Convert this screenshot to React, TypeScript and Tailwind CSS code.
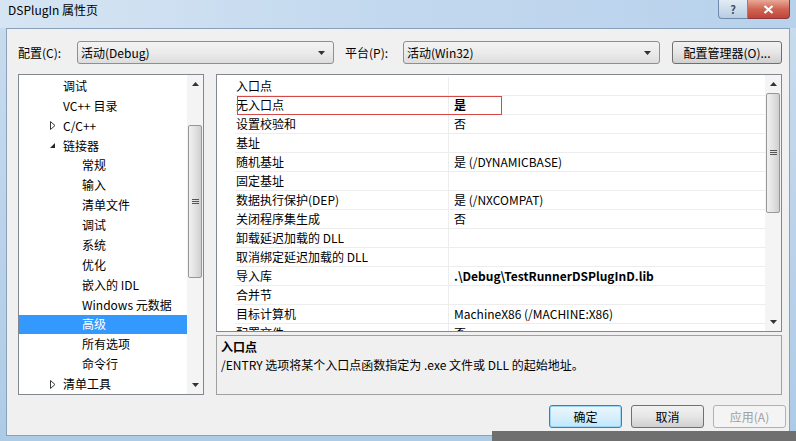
import React from "react";

const FONT = { fontFamily: '"Noto Sans CJK SC", "Liberation Sans", sans-serif' };

type TreeItem = { label: string; level: 1 | 2; arrow?: "open" | "closed"; selected?: boolean };

const treeItems: TreeItem[] = [
  { label: "调试", level: 1 },
  { label: "VC++ 目录", level: 1 },
  { label: "C/C++", level: 1, arrow: "closed" },
  { label: "链接器", level: 1, arrow: "open" },
  { label: "常规", level: 2 },
  { label: "输入", level: 2 },
  { label: "清单文件", level: 2 },
  { label: "调试", level: 2 },
  { label: "系统", level: 2 },
  { label: "优化", level: 2 },
  { label: "嵌入的 IDL", level: 2 },
  { label: "Windows 元数据", level: 2 },
  { label: "高级", level: 2, selected: true },
  { label: "所有选项", level: 2 },
  { label: "命令行", level: 2 },
  { label: "清单工具", level: 1, arrow: "closed" },
];

type Prop = { name: string; value?: string; bold?: boolean };

const props: Prop[] = [
  { name: "入口点" },
  { name: "无入口点", value: "是", bold: true },
  { name: "设置校验和", value: "否" },
  { name: "基址" },
  { name: "随机基址", value: "是 (/DYNAMICBASE)" },
  { name: "固定基址" },
  { name: "数据执行保护(DEP)", value: "是 (/NXCOMPAT)" },
  { name: "关闭程序集生成", value: "否" },
  { name: "卸载延迟加载的 DLL" },
  { name: "取消绑定延迟加载的 DLL" },
  { name: "导入库", value: ".\\Debug\\TestRunnerDSPlugInD.lib", bold: true },
  { name: "合并节" },
  { name: "目标计算机", value: "MachineX86 (/MACHINE:X86)" },
  { name: "配置文件", value: "否" },
];

const Tri = ({ dir }: { dir: "up" | "down" }) => (
  <svg width="7" height="4" viewBox="0 0 7 4">
    {dir === "up" ? <path d="M0 4 L3.5 0 L7 4 Z" fill="#333" /> : <path d="M0 0 L7 0 L3.5 4 Z" fill="#333" />}
  </svg>
);

const Grip = () => (
  <svg width="7" height="6" viewBox="0 0 7 6">
    <path d="M0 0.5H7M0 2.5H7M0 4.5H7" stroke="#555" strokeWidth="1" />
  </svg>
);

const Scrollbar = ({ thumbTop, thumbHeight }: { thumbTop: number; thumbHeight: number }) => (
  <div className="relative w-[16px] h-full bg-[#f4f4f4] flex flex-col items-center justify-between py-[7px]">
    <Tri dir="up" />
    <div
      className="absolute left-[1px] w-[14px] rounded-[2px] border border-[#979797] bg-gradient-to-r from-[#f0f0f0] via-[#e2e2e2] to-[#cfcfcf] flex items-center justify-center"
      style={{ top: thumbTop, height: thumbHeight }}
    >
      <Grip />
    </div>
    <Tri dir="down" />
  </div>
);

const Combo = ({ text, width }: { text: string; width: string }) => (
  <div
    className={`${width} h-[23px] rounded-[3px] border border-[#8e8f8f] bg-gradient-to-b from-[#f3f3f3] via-[#ebebeb] to-[#dddddd] flex items-center pl-[3px] pr-[8px] text-[12px] text-black`}
  >
    <span className="flex-1 leading-none">{text}</span>
    <Tri dir="down" />
  </div>
);

const Button = ({ children, variant }: { children: React.ReactNode; variant?: "default" | "disabled" }) => {
  const base = "w-[73px] h-[23px] rounded-[3px] border flex items-center justify-center text-[12px]";
  if (variant === "default")
    return <div className={`${base} border-[#3c7fb1] bg-gradient-to-b from-[#eaf6fd] via-[#d9f0fc] to-[#bee6fd] text-black shadow-[inset_0_0_0_1px_#9fd5f5]`}>{children}</div>;
  if (variant === "disabled")
    return <div className={`${base} border-[#adb2b5] bg-[#f4f4f4] text-[#a0a0a0]`}>{children}</div>;
  return <div className={`${base} border-[#707070] bg-gradient-to-b from-[#f2f2f2] via-[#e6e6e6] to-[#d0d0d0] text-black`}>{children}</div>;
};

const Arrow = ({ open }: { open: boolean }) =>
  open ? (
    <svg width="7" height="7" viewBox="0 0 7 7">
      <path d="M6 1 L6 6 L1 6 Z" fill="#262626" />
    </svg>
  ) : (
    <svg width="6" height="9" viewBox="0 0 6 9">
      <path d="M0.5 0.5 L5 4.5 L0.5 8.5 Z" fill="none" stroke="#3a3a3a" strokeWidth="1" />
    </svg>
  );

export default function App() {
  return (
    <div className="relative w-[796px] h-[441px] overflow-hidden bg-gradient-to-b from-[#c9dcef] to-[#aecbe6] text-black" style={FONT}>
      {/* title bar */}
      <div className="h-[28px] flex items-start bg-gradient-to-r from-[#d6e5f3] via-[#c2d8ee] to-[#b8d2ec]">
        <span className="ml-[8px] mt-[2px] text-[12px] leading-[16px]">DSPlugIn 属性页</span>
        <div className="ml-auto mr-[6px] flex">
          <div className="w-[30px] h-[19px] rounded-bl-[4px] border border-t-0 border-[#6e8bab] bg-gradient-to-b from-[#e3ecf5] to-[#b7cde3] flex items-center justify-center text-[11px] text-[#3d4f66] font-bold leading-none">
            ?
          </div>
          <div className="w-[42px] h-[19px] rounded-br-[4px] border border-t-0 border-l-0 border-[#8a3a3a] bg-gradient-to-b from-[#e8a898] via-[#d06554] to-[#c0443a] flex items-center justify-center">
            <svg width="11" height="9" viewBox="0 0 11 9">
              <path d="M1.5 1 L9.5 8 M9.5 1 L1.5 8" stroke="#fff" strokeWidth="2.2" />
            </svg>
          </div>
        </div>
      </div>

      {/* client area */}
      <div className="mx-[6px] h-[408px] border border-[#8aa1bb] bg-[#f0f0f0] pl-[11px] pt-[12px] text-[12px]">
        <div className="flex items-center h-[23px]">
          <span className="w-[59px] leading-none">配置(C):</span>
          <Combo text="活动(Debug)" width="w-[257px]" />
          <span className="w-[58px] ml-[11px] leading-none">平台(P):</span>
          <Combo text="活动(Win32)" width="w-[257px]" />
          <div className="ml-[12px] w-[110px] h-[23px] rounded-[3px] border border-[#707070] bg-gradient-to-b from-[#f2f2f2] via-[#e6e6e6] to-[#d0d0d0] flex items-center justify-center leading-none">
            配置管理器(O)...
          </div>
        </div>

        <div className="mt-[10px] flex h-[321px]">
          {/* tree */}
          <div className="w-[186px] h-full border border-[#828790] bg-white flex">
            <div className="flex-1 flex flex-col pt-px">
              {treeItems.map((it, i) => (
                <div
                  key={i}
                  className={`h-[20px] flex items-center leading-none ${it.selected ? "bg-[#3399ff] text-white" : ""}`}
                >
                  {it.level === 1 ? (
                    <>
                      <span className="w-[44px] flex justify-end pr-[7px]">{it.arrow && <Arrow open={it.arrow === "open"} />}</span>
                      <span>{it.label}</span>
                    </>
                  ) : (
                    <span className="pl-[63px]">{it.label}</span>
                  )}
                </div>
              ))}
            </div>
            <Scrollbar thumbTop={50} thumbHeight={153} />
          </div>

          {/* right column */}
          <div className="ml-[12px] w-[566px] h-full flex flex-col">
            <div className="relative h-[258px] border border-[#828790] bg-white flex overflow-hidden">
              <div className="flex-1 flex flex-col pl-[18px] pt-[2px]">
                {props.map((p, i) => (
                  <div key={i} className="h-[19px] shrink-0 flex border-b border-[#ededed]">
                    <span className="w-[214px] pl-[1px] flex items-center leading-none border-r border-[#ededed]">{p.name}</span>
                    <span className={`pl-[5px] flex items-center leading-none ${p.bold ? "font-bold" : ""}`}>{p.value}</span>
                  </div>
                ))}
              </div>
              <Scrollbar thumbTop={18} thumbHeight={120} />
              <div className="absolute left-[20px] top-[21px] w-[265px] h-[19px] border border-[#d44848]" />
            </div>
            <div className="mt-[3px] h-[60px] border border-[#a0a0a0] bg-[#f0f0f0] pl-[4px] pt-[4px] flex flex-col gap-[4px]">
              <span className="font-bold leading-[14px]">入口点</span>
              <span className="leading-[14px]">/ENTRY 选项将某个入口点函数指定为 .exe 文件或 DLL 的起始地址。</span>
            </div>
          </div>
        </div>

        <div className="mt-[10px] flex justify-end pr-[3px] gap-[9px]">
          <Button variant="default">确定</Button>
          <Button>取消</Button>
          <Button variant="disabled">应用(A)</Button>
        </div>
      </div>

      <div className="absolute left-[492px] top-[431px] w-[304px] h-[10px] bg-[#6f6f6f]" />
    </div>
  );
}
